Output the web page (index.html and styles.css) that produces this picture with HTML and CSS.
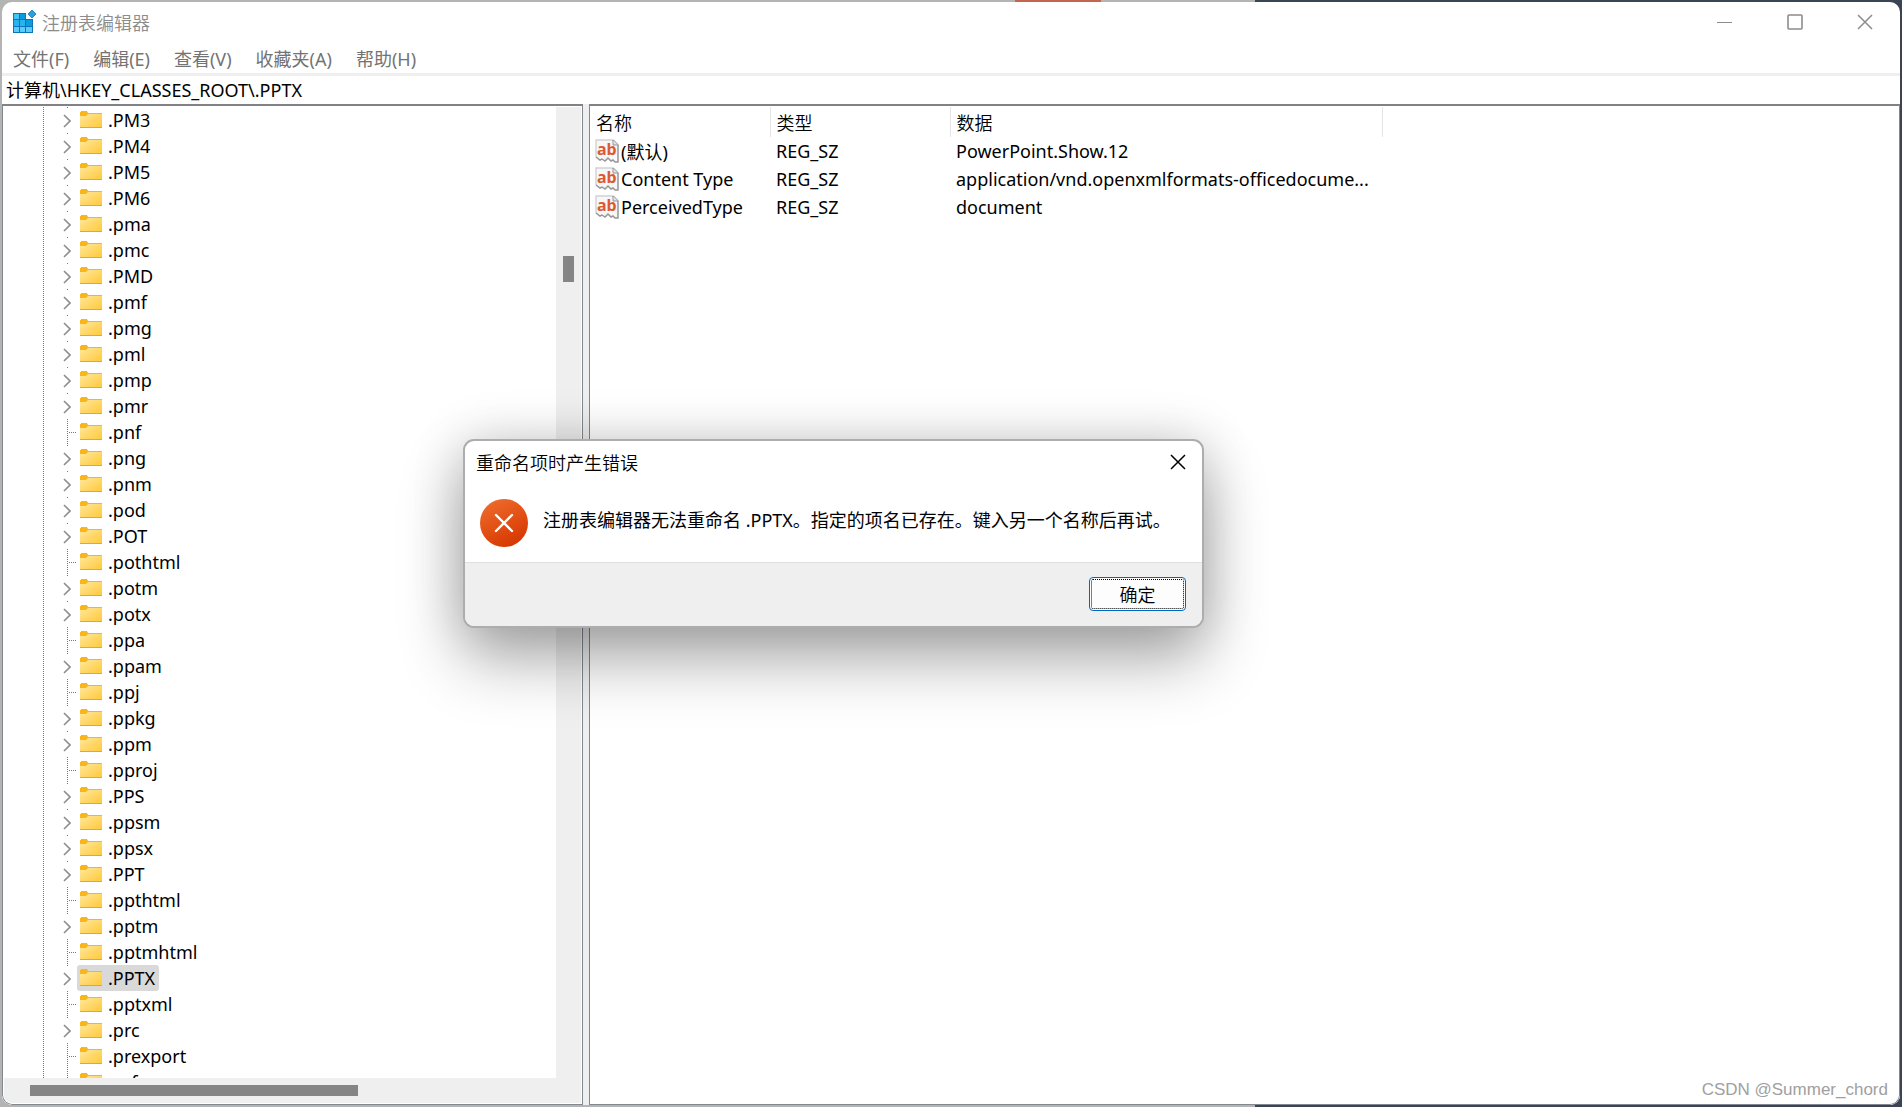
FILE: index.html
```html
<!DOCTYPE html>
<html lang="zh-CN">
<head>
    <meta charset="UTF-8">
    <meta name="viewport" content="width=device-width, initial-scale=1.0">
    <title>注册表编辑器</title>
    <link rel="stylesheet" href="styles.css">
</head>
<body>

    <!-- shared icons -->
    <svg class="sprite" width="0" height="0" aria-hidden="true">
        <defs>
            <linearGradient id="folderFill" x1="0" y1="0" x2="1" y2="1">
                <stop offset="0" stop-color="#ffe79c"/>
                <stop offset="1" stop-color="#ffc937"/>
            </linearGradient>
            <linearGradient id="errorFill" x1="0.2" y1="0" x2="0.7" y2="1">
                <stop offset="0" stop-color="#ee6c2c"/>
                <stop offset="1" stop-color="#d63600"/>
            </linearGradient>
        </defs>
        <symbol id="folder" viewBox="0 0 22 18">
            <path d="M0 1h1V0h6l1 2h14v4H0z" fill="#f8b51c"/>
            <path d="M0 5h6l2-2h14v14H0z" fill="url(#folderFill)"/>
            <path d="M0 16h22v1H0z" fill="#eda61c"/>
        </symbol>
        <symbol id="chevron" viewBox="0 0 8 14">
            <path d="M1 1l6 6-6 6" fill="none" stroke="#8e8e8e" stroke-width="1.6"/>
        </symbol>
        <symbol id="cross" viewBox="0 0 16 16">
            <path d="M1 1l14 14M15 1L1 15" fill="none" stroke="currentColor" stroke-width="1.5"/>
        </symbol>
        <symbol id="sheet" viewBox="0 0 24 24">
            <path d="M1 1h18l4 4v18h-3l-2-2-2 1-3-3-3 3-3-2-2 1-4-3z" fill="#f7f7f7"/>
            <path d="M1 18V1h17" fill="none" stroke="#d2d2d2" stroke-width="1.4"/>
            <path d="M18 1l5 5v17h-3l-2-2-2 1-3-3-3 3-3-2-2 1-4-3" fill="none" stroke="#979797" stroke-width="1.5"/>
            <path d="M18 1v5h5" fill="#e4e4e4" stroke="#979797"/>
        </symbol>
    </svg>

    <div class="window">
        <header class="titlebar">
            <svg class="app-icon" width="24" height="24" viewBox="0 0 24 24" aria-hidden="true">
                <path d="M0 3h13v6h7v14H0z" fill="#0a76b8"/>
                <path d="M1 4h5v5H1z" fill="#45c3f5"/>
                <path d="M7 4h5v5H7z" fill="#0c9bdc"/>
                <path d="M1 10h5v6H1zM7 10h5v6H7z" fill="#28b2ee"/>
                <path d="M13 10h6v6h-6z" fill="#0c9bdc"/>
                <path d="M1 17h5v5H1zM7 17h5v5H7zM13 17h6v5h-6z" fill="#5ccbf8"/>
                <path d="M19 0l4 4-4 4-4-4z" fill="#2a9fdc" stroke="#2a8cc4"/>
            </svg>
            <h1>注册表编辑器</h1>
            <div class="caption-buttons">
                <button aria-label="最小化"><svg width="16" height="16" viewBox="0 0 16 16"><path d="M0 8.500h15" stroke="currentColor"/></svg></button>
                <button aria-label="最大化"><svg width="16" height="16" viewBox="0 0 16 16"><rect x="1" y="1" width="14" height="14" rx="1" fill="none" stroke="currentColor" stroke-width="1.6"/></svg></button>
                <button aria-label="关闭"><svg width="16" height="16"><use href="#cross"/></svg></button>
            </div>
        </header>

        <nav class="menu">
            <button>文件(F)</button>
            <button>编辑(E)</button>
            <button>查看(V)</button>
            <button>收藏夹(A)</button>
            <button>帮助(H)</button>
        </nav>

        <input class="address" type="text" aria-label="地址" value="计算机\HKEY_CLASSES_ROOT\.PPTX">

        <main class="panes">
            <section class="tree-pane">
                <ul class="tree" id="tree"></ul>
                <div class="scroll-v"><div class="thumb"></div></div>
                <div class="scroll-h"><div class="thumb"></div></div>
            </section>

            <section class="list-pane">
                <table class="values">
                    <thead>
                        <tr><th class="col-name">名称</th><th class="col-type">类型</th><th class="col-data">数据</th></tr>
                    </thead>
                    <tbody>
                        <tr>
                            <td><div class="name"><span class="icon"><svg width="24" height="24"><use href="#sheet"/></svg><b>ab</b></span>(默认)</div></td>
                            <td>REG_SZ</td>
                            <td>PowerPoint.Show.12</td>
                        </tr>
                        <tr>
                            <td><div class="name"><span class="icon"><svg width="24" height="24"><use href="#sheet"/></svg><b>ab</b></span>Content Type</div></td>
                            <td>REG_SZ</td>
                            <td>application/vnd.openxmlformats-officedocume...</td>
                        </tr>
                        <tr>
                            <td><div class="name"><span class="icon"><svg width="24" height="24"><use href="#sheet"/></svg><b>ab</b></span>PerceivedType</div></td>
                            <td>REG_SZ</td>
                            <td>document</td>
                        </tr>
                    </tbody>
                </table>
                <span class="watermark">CSDN @Summer_chord</span>
            </section>
        </main>
    </div>

    <div class="dialog" role="alertdialog" aria-labelledby="dialogTitle" aria-describedby="dialogText">
        <div class="dialog-title">
            <h2 id="dialogTitle">重命名项时产生错误</h2>
            <button aria-label="关闭"><svg width="16" height="16"><use href="#cross"/></svg></button>
        </div>
        <div class="dialog-body">
            <svg width="48" height="48" viewBox="0 0 48 48" aria-hidden="true">
                <circle cx="24" cy="24" r="24" fill="url(#errorFill)"/>
                <path d="M16 16l16 16M32 16L16 32" stroke="#fff" stroke-width="2.400" stroke-linecap="round"/>
            </svg>
            <p id="dialogText">注册表编辑器无法重命名 .PPTX。指定的项名已存在。键入另一个名称后再试。</p>
        </div>
        <div class="dialog-footer">
            <button class="ok">确定</button>
        </div>
    </div>

    <script>
        const keys = [
            ".PM3", ".PM4", ".PM5", ".PM6", ".pma", ".pmc", ".PMD", ".pmf", ".pmg", ".pml",
            ".pmp", ".pmr", ".pnf", ".png", ".pnm", ".pod", ".POT", ".pothtml", ".potm", ".potx",
            ".ppa", ".ppam", ".ppj", ".ppkg", ".ppm", ".pproj", ".PPS", ".ppsm", ".ppsx", ".PPT",
            ".ppthtml", ".pptm", ".pptmhtml", ".PPTX", ".pptxml", ".prc", ".prexport", ".prf"
        ];
        // keys without subkeys get a dotted branch instead of an arrow
        const leaves = [".pnf", ".pothtml", ".ppa", ".ppj", ".pproj", ".ppthtml", ".pptmhtml", ".pptxml", ".prexport", ".prf"];
        const selected = ".PPTX";

        document.getElementById("tree").innerHTML = keys.map(key => {
            const leaf = leaves.includes(key);
            const toggle = leaf
                ? '<span class="branch"></span>'
                : `<button class="toggle" aria-label="展开 ${key}"><svg width="8" height="14"><use href="#chevron"/></svg></button>`;
            return `<li class="${leaf ? "leaf" : ""}">${toggle}<span class="key${key === selected ? " selected" : ""}"><svg width="22" height="18"><use href="#folder"/></svg>${key}</span></li>`;
        }).join("");
    </script>

</body>
</html>
```

FILE: styles.css
```css
* {
    box-sizing: border-box;
}
body {
    margin: 0;
    height: 100vh;
    padding: 2px;
    overflow: hidden;
    display: flex;
    font-family: "Noto Sans", "Noto Sans CJK SC", sans-serif;
    font-size: 18px;
    color: #000;
    background:
        linear-gradient(#c2664f, #c2664f) 1015px 0 / 86px 2px no-repeat,
        linear-gradient(to right, #b4b4b4 66%, #3a4454 66%);
}
h1, h2, p, ul {
    margin: 0;
    padding: 0;
    font-size: 18px;
    font-weight: 350;
}
button {
    padding: 0;
    border: none;
    background: none;
    font: inherit;
    color: inherit;
}
svg {
    display: block;
    flex: none;
}
.sprite {
    position: absolute;
}

.window {
    flex: 1;
    display: flex;
    flex-direction: column;
    background: #fff;
    border-radius: 10px;
    overflow: hidden;
}

/* title bar */
.titlebar {
    display: flex;
    align-items: center;
    height: 40px;
    padding-left: 11px;
    gap: 5px;
    color: #8c8c8c;
}
.caption-buttons {
    display: flex;
    margin-left: auto;
}
.caption-buttons button {
    display: flex;
    align-items: center;
    justify-content: center;
    width: 70px;
    height: 40px;
}

/* menu and address bar */
.menu {
    display: flex;
    align-items: center;
    gap: 24px;
    height: 34px;
    padding-left: 11px;
    border-bottom: 3px solid #efefef;
    color: #737373;
}
.address {
    width: 100%;
    height: 28px;
    padding: 0 4px 2px;
    border: none;
    outline: none;
    font: inherit;
    color: #000;
}

.panes {
    flex: 1;
    display: flex;
    gap: 6px;
    min-height: 0;
    background: #efefef;
}
.tree-pane,
.list-pane {
    background: #fff;
    border: 1px solid #828790;
    border-top: 2px solid #828286;
}

/* tree */
.tree-pane {
    display: grid;
    grid-template-columns: 1fr 25px;
    grid-template-rows: minmax(0, 1fr) 25px;
    width: 581px;
    padding: 1px;
    border-bottom-left-radius: 10px;
}
.tree {
    overflow: hidden;
    padding-left: 39px;
    list-style: none;
    font-weight: 400;
    background: repeating-linear-gradient(#777 0 1px, #fff 1px 2px) 39px 0 / 1px 100% no-repeat;
}
.tree li {
    display: flex;
    align-items: center;
    height: 26px;
    padding-left: 18px;
    background: linear-gradient(#777, #777) 24px 0 / 1px 1px no-repeat;
}
.tree li.leaf {
    background: repeating-linear-gradient(#777 0 1px, #fff 1px 2px) 24px 0 / 1px 100% no-repeat;
}
.toggle,
.branch {
    width: 16px;
}
.toggle {
    padding: 2px 0 0 2px;
}
.branch {
    height: 1px;
    background: repeating-linear-gradient(to right, #777 0 1px, #fff 1px 2px) 8px 0 / 10px 1px no-repeat;
}
.key {
    display: flex;
    align-items: center;
    gap: 6px;
    height: 26px;
    padding: 0 4px 0 3px;
    border-radius: 3px;
}
.selected {
    background: #d9d9d9;
}

/* scroll bars */
.scroll-v,
.scroll-h {
    background: #efefef;
}
.scroll-v {
    padding: 149px 7px 0;
}
.scroll-v .thumb {
    height: 26px;
}
.scroll-h {
    grid-column: 1 / 3;
    padding: 7px 0 0 26px;
    border-bottom-left-radius: 8px;
}
.scroll-h .thumb {
    width: 328px;
    height: 11px;
}
.thumb {
    background: #858585;
}

/* value list */
.list-pane {
    flex: 1;
    position: relative;
    padding-top: 1px;
    border-bottom-right-radius: 10px;
}
.values {
    table-layout: fixed;
    border-collapse: collapse;
    width: 793px;
}
.values th,
.values td {
    padding: 0 0 0 6px;
    text-align: left;
    font-weight: 400;
    white-space: nowrap;
}
.values th {
    height: 30px;
    border-right: 1px solid #e4e4e4;
    font-weight: 350;
}
.values td {
    height: 28px;
}
.values td:first-child {
    padding-left: 5px;
}
.col-name {
    width: 180px;
}
.col-type {
    width: 180px;
}
.name {
    display: flex;
    align-items: center;
    gap: 2px;
}
.icon {
    position: relative;
}
.icon b {
    position: absolute;
    top: 0;
    left: 2px;
    font-size: 16px;
    line-height: 20px;
    color: #dc5a33;
}
.watermark {
    position: absolute;
    right: 11px;
    bottom: 4px;
    font-family: "Liberation Sans", Arial, sans-serif;
    font-size: 17px;
    color: #a0a0a0;
}

/* error dialog */
.dialog {
    position: absolute;
    top: 439px;
    left: 463px;
    width: 741px;
    border: 2px solid #adadad;
    border-radius: 11px;
    background: #fff;
    box-shadow: 0 32px 64px rgba(0, 0, 0, .32), 0 0 52px rgba(0, 0, 0, .16);
    overflow: hidden;
}
.dialog-title {
    display: flex;
    align-items: center;
    justify-content: space-between;
    height: 42px;
    padding: 0 16px 0 11px;
}
.dialog-body {
    display: flex;
    gap: 15px;
    height: 79px;
    padding: 16px 15px 14px;
}
.dialog-body p {
    line-height: 42px;
    font-weight: 400;
    white-space: nowrap;
}
.dialog-footer {
    display: flex;
    justify-content: flex-end;
    height: 64px;
    padding: 14px 16px;
    border-top: 1px solid #dfdfdf;
    background: #efefef;
}
.ok {
    width: 97px;
    height: 34px;
    border: 1px solid #0067c0;
    border-radius: 4px;
    background: #fdfdfd;
    outline: 1px dotted #000;
    outline-offset: -3px;
    font-weight: 350;
}
```
